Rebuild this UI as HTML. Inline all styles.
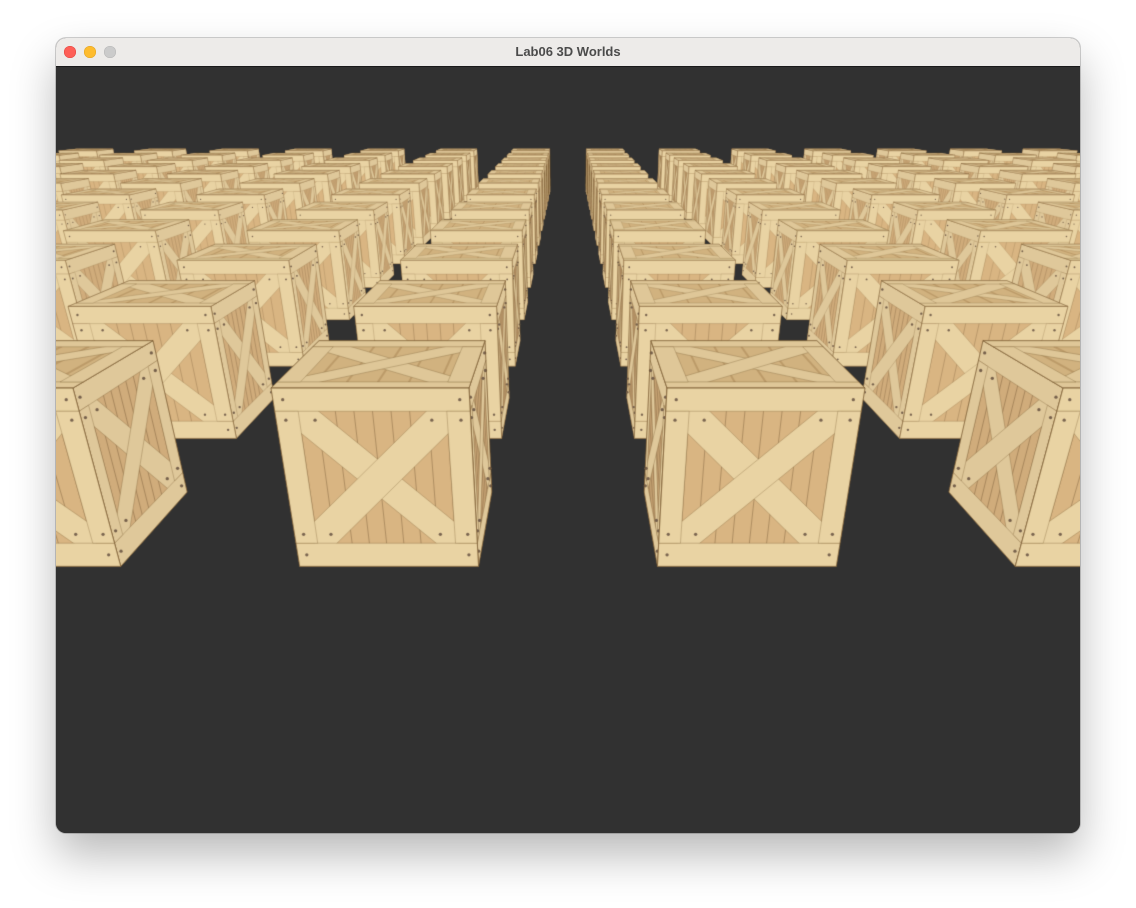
<!DOCTYPE html>
<html><head><meta charset="utf-8"><style>
html,body{margin:0;padding:0;background:#fff;width:1136px;height:908px;overflow:hidden}
#win{position:absolute;left:56px;top:38px;width:1024px;height:795px;border-radius:10px;overflow:hidden;
box-shadow:0 22px 45px rgba(0,0,0,.28),0 0 0 1px rgba(0,0,0,.18);background:#313131}
#tb{position:absolute;left:0;top:0;width:1024px;height:28px;background:#edebe9;border-bottom:1px solid #1a1a1a}
#tb .t{position:absolute;left:0;width:100%;top:6px;text-align:center;font:bold 13px "Liberation Sans",sans-serif;color:#4b4b4b}
.l{position:absolute;top:7.5px;width:12px;height:12px;border-radius:50%}
canvas{position:absolute;left:0;top:29px}
</style></head><body>
<div id="win">
<div id="tb"><div class="l" style="left:8px;background:#fe5f57;box-shadow:inset 0 0 0 .5px #e0443e"></div>
<div class="l" style="left:28px;background:#febc2e;box-shadow:inset 0 0 0 .5px #dea123"></div>
<div class="l" style="left:48px;background:#cbcbcb;box-shadow:inset 0 0 0 .5px #b5b5b5"></div>
<div class="t">Lab06 3D Worlds</div></div>
<canvas id="c" width="1024" height="766"></canvas>
</div>
<script>
var c=document.getElementById('c'),g=c.getContext('2d');
g.fillStyle='#313131';g.fillRect(0,0,1024,766);
function P(X,Y,t){var wt=1/(0.00505+0.000975*t);var y,xs;
 if(Y){y=95+1.48*wt;xs=wt}else{y=107+2.32*wt;xs=1/(1/wt+0.00054)}
 return [512+X*xs,y-67];}
function Q(f,s,v){var a=f[0],b=f[1],cc=f[2],d=f[3];
 var tx=a[0]+(b[0]-a[0])*s,ty=a[1]+(b[1]-a[1])*s,bx=d[0]+(cc[0]-d[0])*s,by=d[1]+(cc[1]-d[1])*s;
 return [tx+(bx-tx)*v,ty+(by-ty)*v];}
function poly(f,pts,fill,stroke,lw){g.beginPath();for(var i=0;i<pts.length;i++){var p=Q(f,pts[i][0],pts[i][1]);if(i)g.lineTo(p[0],p[1]);else g.moveTo(p[0],p[1]);}
 g.closePath();if(fill){g.fillStyle=fill;g.fill();}if(stroke){g.strokeStyle=stroke;g.lineWidth=lw;g.stroke();}}
function rect(f,s0,v0,s1,v1,fill,stroke,lw){poly(f,[[s0,v0],[s1,v0],[s1,v1],[s0,v1]],fill,stroke,lw);}
function line(f,s0,v0,s1,v1,col,lw){var p=Q(f,s0,v0),q=Q(f,s1,v1);g.beginPath();g.moveTo(p[0],p[1]);g.lineTo(q[0],q[1]);g.strokeStyle=col;g.lineWidth=lw;g.stroke();}
function panel(f,w,shade,top){
 var lw=Math.max(0.4,w/200);
 var base=top?'#d8b985':'#d9b582',board=top?'#e6cf9f':'#e9d3a3';
 rect(f,0,0,1,1,base);
 if(!top){for(var s=0.12;s<0.9;s+=0.095) line(f,s,0.12,s,0.88,'rgba(80,55,25,.45)',lw*0.7);}
 else{for(var s=0.2;s<0.9;s+=0.16) line(f,s,0.12,s,0.88,'rgba(130,90,45,.25)',lw*2);}
 var e='rgba(120,90,50,.45)';
 var h=0.115;
 poly(f,[[0.1,0.12],[0.1+h,0.12],[0.9,0.88-h],[0.9,0.88],[0.9-h,0.88],[0.1,0.12+h]],board,e,lw*0.7);
 poly(f,[[0.9,0.12],[0.9,0.12+h],[0.1+h,0.88],[0.1,0.88],[0.1,0.88-h],[0.9-h,0.12]],board,e,lw*0.7);
 rect(f,0,0,1,0.13,board,e,lw*0.7);
 rect(f,0,0.87,1,1,board,e,lw*0.7);
 rect(f,0,0.13,0.12,0.87,board,e,lw*0.7);
 rect(f,0.88,0.13,1,0.87,board,e,lw*0.7);
 if(!top&&w>60){var r=Math.max(0.6,w/120);g.fillStyle='#7a6550';
  [[0.05,0.065],[0.95,0.065],[0.05,0.935],[0.95,0.935],[0.05,0.18],[0.95,0.18],[0.05,0.82],[0.95,0.82],[0.2,0.18],[0.8,0.18],[0.2,0.82],[0.8,0.82]].forEach(function(n){var p=Q(f,n[0],n[1]);g.beginPath();g.arc(p[0],p[1],r,0,7);g.fill();});}
 if(shade){rect(f,0,0,1,1,shade);}
 rect(f,0,0,1,1,null,'rgba(110,80,40,.55)',lw);
}
function crate(xc,r){
 var xl=xc-0.5,xr=xc+0.5,t=r*2,w=1/(0.00505+0.000975*t);
 var fr=[P(xl,1,t),P(xr,1,t),P(xr,0,t),P(xl,0,t)];
 var minx=Math.min(fr[0][0],fr[3][0])-w*1.2,maxx=Math.max(fr[1][0],fr[2][0])+w*1.2;
 if(maxx<0||minx>1024)return;
 var top=[P(xl,1,t+1),P(xr,1,t+1),P(xr,1,t),P(xl,1,t)];
 var side=xc<0?[P(xr,1,t),P(xr,1,t+1),P(xr,0,t+1),P(xr,0,t)]:[P(xl,1,t+1),P(xl,1,t),P(xl,0,t),P(xl,0,t+1)];
 panel(side,w,'rgba(60,35,10,.06)',false);
 panel(top,w,'rgba(60,35,10,.04)',true);
 panel(fr,w,null,false);
}
for(var r=11;r>=0;r--){
 for(var k=15;k>=1;k-=2){crate(-k,r);crate(k,r);}
}
</script>
</body></html>
